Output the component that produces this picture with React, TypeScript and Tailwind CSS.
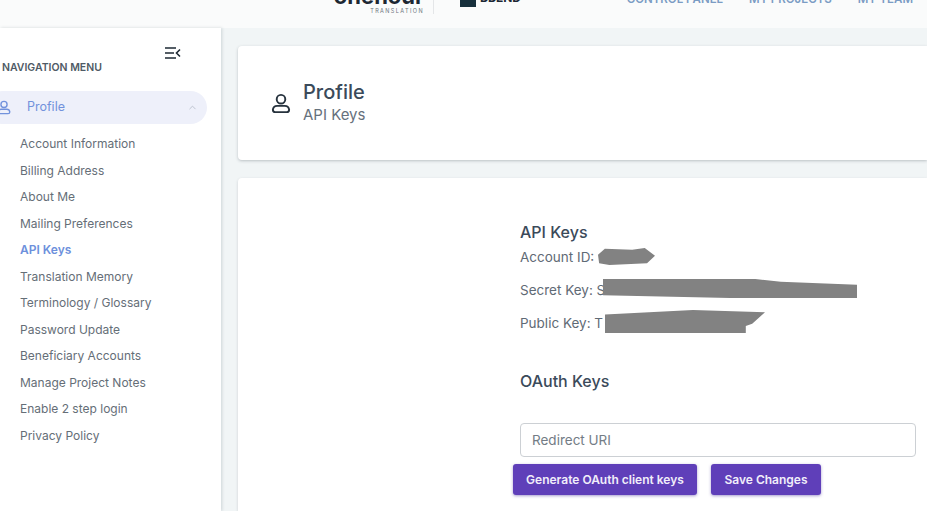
import React from 'react';
import { ChevronUp } from 'lucide-react';

const menuItems = [
  'Account Information',
  'Billing Address',
  'About Me',
  'Mailing Preferences',
  'API Keys',
  'Translation Memory',
  'Terminology / Glossary',
  'Password Update',
  'Beneficiary Accounts',
  'Manage Project Notes',
  'Enable 2 step login',
  'Privacy Policy',
];

const UserIcon = ({ className }: { className: string }) => (
  <svg viewBox="0 0 20 22" fill="none" stroke="currentColor" strokeWidth="2" className={className}>
    <circle cx="10" cy="6.5" r="4.5" />
    <path d="M6 13.5h8a4.5 4.5 0 0 1 4.5 4v0a2.5 2.5 0 0 1-2.5 2.5H4a2.5 2.5 0 0 1-2.5-2.5v0a4.5 4.5 0 0 1 4.5-4z" />
  </svg>
);

const Smear = ({ className, points }: { className: string; points: string }) => (
  <svg viewBox="0 0 100 20" preserveAspectRatio="none" className={`absolute blur-[0.6px] ${className}`}>
    <polygon points={points} fill="#828282" />
  </svg>
);

const App: React.FC = () => {
  return (
    <div className="w-[927px] h-[511px] overflow-hidden flex flex-col bg-[#f1f5f6] font-['Inter',sans-serif]">
      <header className="h-[28px] shrink-0 bg-[#fafbfb] overflow-hidden flex items-start">
        <div className="ml-[337px] -mt-[14px] w-[87px] flex flex-col items-end">
          <span className="text-[22px] leading-[20px] font-bold text-[#1d2733]">onehour</span>
          <span className="text-[5.5px] leading-[8px] mt-[1px] tracking-[1.4px] text-[#6b747c]">TRANSLATION</span>
        </div>
        <div className="ml-[9px] h-[14px] w-px bg-[#e4e6e8]" />
        <div className="ml-[26px] -mt-[5px] w-[16px] h-[12px] bg-[#17303c]" />
        <span className="ml-[4px] -mt-[9px] text-[12px] leading-[14px] font-bold text-[#1d2733]">BBEND</span>
        <nav className="ml-auto -mt-[8px] mr-[14px] flex gap-[26px] text-[11.5px] leading-[14px] font-semibold text-[#7b9cc4]">
          <span>CONTROL PANEL</span>
          <span>MY PROJECTS</span>
          <span>MY TEAM</span>
        </nav>
      </header>

      <div className="flex flex-1 min-h-0">
        <aside className="w-[221px] shrink-0 bg-white shadow-[1px_0_3px_rgba(60,80,90,0.2)] relative pr-[14px]">
          <div className="flex justify-end pt-[19px] pr-[26px] text-[#1e2a35]">
            <svg viewBox="0 0 16 12" fill="none" stroke="currentColor" strokeWidth="1.6" className="w-[16px] h-[12px]">
              <path d="M0 1h11M0 6h9M0 11h11M15 2.5 11.5 6 15 9.5" />
            </svg>
          </div>
          <div className="pl-[2px] mt-[2px] text-[10.5px] leading-[14px] font-semibold text-[#4f5a65]">NAVIGATION MENU</div>
          <div className="mt-[16px] -ml-[14px] h-[33px] rounded-full bg-[#eef0fa] flex items-center pl-[11px] pr-[9px] text-[#7292dc]">
            <UserIcon className="w-[14px] h-[15px] shrink-0" />
            <span className="ml-[16px] text-[12.5px]">Profile</span>
            <ChevronUp className="ml-auto w-[11px] h-[11px] text-[#b9bfcc]" />
          </div>
          <ul className="mt-[7px] pl-[20px]">
            {menuItems.map((item) => (
              <li
                key={item}
                className={`h-[26.5px] flex items-center text-[12px] ${
                  item === 'API Keys' ? 'text-[#6d90dc] font-semibold' : 'text-[#656e77]'
                }`}
              >
                {item}
              </li>
            ))}
          </ul>
        </aside>

        <main className="flex-1 min-w-0 pl-[17px] pt-[18px] flex flex-col gap-[18px]">
          <section className="h-[114px] shrink-0 bg-white rounded-l-[4px] shadow-[0_1px_3px_rgba(60,70,80,0.3)] flex items-center pl-[33px]">
            <UserIcon className="w-[20px] h-[21px] text-[#26323d]" />
            <div className="ml-[12px]">
              <div className="text-[20px] leading-[23px] font-medium text-[#3b4a5a]">Profile</div>
              <div className="text-[15px] leading-[22px] text-[#66717c]">API Keys</div>
            </div>
          </section>

          <section className="flex-1 bg-white rounded-tl-[4px] shadow-[0_1px_3px_rgba(60,70,80,0.2)] pl-[282px] pr-[11px] pt-[43px]">
            <h2 className="text-[16px] leading-[22px] font-medium text-[#3b4a5a]">API Keys</h2>
            <p className="relative mt-[5px] text-[13.5px] leading-[18px] text-[#5f6a75]">
              Account ID:
              <Smear className="left-[78px] top-0 w-[57px] h-[17px]" points="0,8 12,1 60,2 82,0 100,9 86,18 20,20 2,18" />
            </p>
            <p className="relative mt-[15px] text-[13.5px] leading-[18px] text-[#5f6a75]">
              Secret Key: S
              <Smear className="left-[83px] -top-[2px] w-[254px] h-[19px]" points="0,0 60,0 70,3 100,6 100,20 50,20 0,17" />
            </p>
            <p className="relative mt-[15px] text-[13.5px] leading-[18px] text-[#5f6a75]">
              Public Key: T
              <Smear className="left-[85px] -top-[4px] w-[160px] h-[23px]" points="0,4 55,0 80,1 100,2 92,12 88,14 88,20 0,20" />
            </p>
            <h2 className="mt-[38px] text-[16px] leading-[22px] font-medium text-[#3b4a5a]">OAuth Keys</h2>
            <input
              placeholder="Redirect URI"
              className="mt-[31px] block w-full h-[34px] px-[11px] bg-white border border-[#ccd0d4] rounded-[4px] text-[13.5px] placeholder:text-[#737c85]"
            />
            <div className="mt-[7px] -ml-[7px] flex gap-[14px]">
              <button className="w-[184px] h-[31px] rounded-[3px] bg-[#5f3fb9] text-[#f1eefa] text-[12px] font-semibold shadow-[0_1px_3px_rgba(80,60,160,0.5)]">
                Generate OAuth client keys
              </button>
              <button className="w-[110px] h-[31px] rounded-[3px] bg-[#5f3fb9] text-[#f1eefa] text-[12px] font-semibold shadow-[0_1px_3px_rgba(80,60,160,0.5)]">
                Save Changes
              </button>
            </div>
          </section>
        </main>
      </div>
    </div>
  );
};

export default App;
